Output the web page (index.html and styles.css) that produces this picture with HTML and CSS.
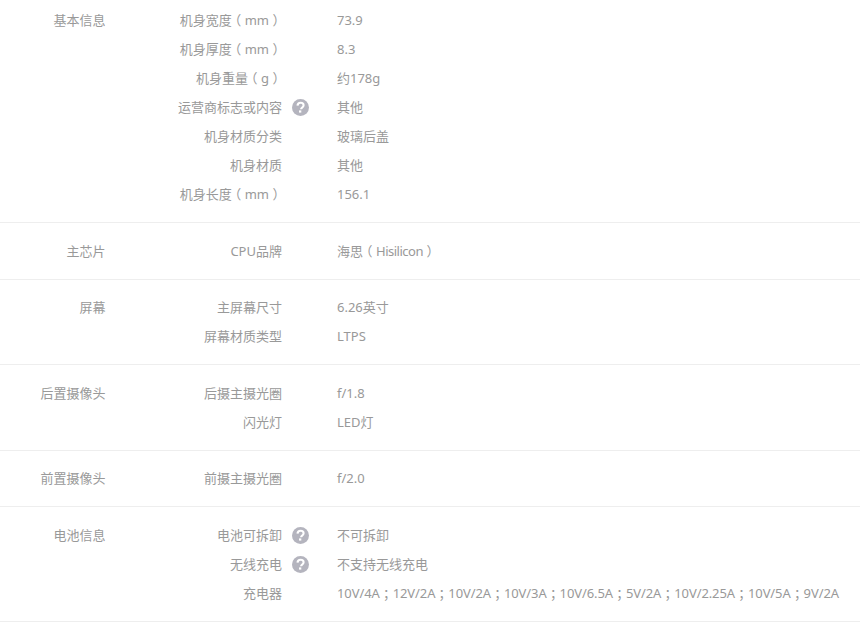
FILE: index.html
```html
<!DOCTYPE html>
<html lang="zh-CN">
<head>
<meta charset="utf-8">
<title>规格参数</title>
<link rel="stylesheet" href="styles.css">
</head>
<body>
<svg class="defs" width="0" height="0" aria-hidden="true"><symbol id="q" viewBox="0 0 17 17"><circle cx="8.5" cy="8.5" r="8.5" fill="#b4b4be"/><path d="M5.5 6.6C5.6 4.8 6.9 3.8 8.6 3.8c1.8 0 3 1.1 3 2.5 0 1.1-.6 1.8-1.5 2.3-.7.5-1 .9-1 1.7" fill="none" stroke="#fff" stroke-width="2.1"/><rect x="7" y="11.4" width="2.3" height="2.2" fill="#fff"/></symbol></svg>
<section class="group">
  <h3 class="group-title">基本信息</h3>
  <div class="rows">
    <div class="row"><div class="name">机身宽度<span class="lp">（</span>mm<span class="rp">）</span></div><div class="value">73.9</div></div>
    <div class="row"><div class="name">机身厚度<span class="lp">（</span>mm<span class="rp">）</span></div><div class="value">8.3</div></div>
    <div class="row"><div class="name">机身重量<span class="lp">（</span>g<span class="rp">）</span></div><div class="value">约178g</div></div>
    <div class="row"><div class="name">运营商标志或内容</div><svg class="help"><use href="#q"/></svg><div class="value">其他</div></div>
    <div class="row"><div class="name">机身材质分类</div><div class="value">玻璃后盖</div></div>
    <div class="row"><div class="name">机身材质</div><div class="value">其他</div></div>
    <div class="row"><div class="name">机身长度<span class="lp">（</span>mm<span class="rp">）</span></div><div class="value">156.1</div></div>
  </div>
</section>
<section class="group">
  <h3 class="group-title">主芯片</h3>
  <div class="rows">
    <div class="row"><div class="name">CPU品牌</div><div class="value">海思<span class="lp">（</span><span class="tight">Hisilicon</span><span class="rp">）</span></div></div>
  </div>
</section>
<section class="group">
  <h3 class="group-title">屏幕</h3>
  <div class="rows">
    <div class="row"><div class="name">主屏幕尺寸</div><div class="value">6.26英寸</div></div>
    <div class="row"><div class="name">屏幕材质类型</div><div class="value">LTPS</div></div>
  </div>
</section>
<section class="group">
  <h3 class="group-title">后置摄像头</h3>
  <div class="rows">
    <div class="row"><div class="name">后摄主摄光圈</div><div class="value">f/1.8</div></div>
    <div class="row"><div class="name">闪光灯</div><div class="value">LED灯</div></div>
  </div>
</section>
<section class="group">
  <h3 class="group-title">前置摄像头</h3>
  <div class="rows">
    <div class="row"><div class="name">前摄主摄光圈</div><div class="value">f/2.0</div></div>
  </div>
</section>
<section class="group">
  <h3 class="group-title">电池信息</h3>
  <div class="rows">
    <div class="row"><div class="name">电池可拆卸</div><svg class="help"><use href="#q"/></svg><div class="value">不可拆卸</div></div>
    <div class="row"><div class="name">无线充电</div><svg class="help"><use href="#q"/></svg><div class="value">不支持无线充电</div></div>
    <div class="row"><div class="name">充电器</div><div class="value charger">10V/4A<span class="sc">；</span>12V/2A<span class="sc">；</span>10V/2A<span class="sc">；</span>10V/3A<span class="sc">；</span>10V/6.5A<span class="sc">；</span>5V/2A<span class="sc">；</span>10V/2.25A<span class="sc">；</span>10V/5A<span class="sc">；</span>9V/2A</div></div>
  </div>
</section>
</body>
</html>
```
FILE: styles.css
```css
html, body {
  margin: 0;
  padding: 0;
  background: #fff;
}
body {
  height: 622px;
  overflow: hidden;
  padding-top: 6px;
  box-sizing: border-box;
  font-family: "Noto Sans", "Noto Sans CJK SC", sans-serif;
  font-size: 13px;
  color: #999;
}
.defs {
  position: absolute;
}
.group {
  display: flex;
  padding: 13.5px 0 13px;
  border-bottom: 1px solid #eee;
}
.group:first-of-type {
  padding-top: 0;
}
.group-title {
  flex: 0 0 105.5px;
  margin: 0;
  font-size: 13px;
  font-weight: normal;
  line-height: 29px;
  text-align: right;
}
.rows {
  flex: 1;
  min-width: 0;
}
.row {
  position: relative;
  display: flex;
  line-height: 29px;
  white-space: nowrap;
}
.name {
  flex: 0 0 176.5px;
  text-align: right;
}
.value {
  margin-left: 55px;
}
.charger {
  letter-spacing: -0.09px;
}
.tight {
  letter-spacing: -0.5px;
}
.lp,
.rp,
.sc {
  font-feature-settings: "halt";
}
.lp {
  margin-left: 3px;
  margin-right: 3.5px;
}
.rp {
  margin-left: 3.5px;
  margin-right: 3px;
}
.sc {
  margin-left: 3.25px;
  margin-right: 3.25px;
}
.help {
  position: absolute;
  left: 186.5px;
  top: 6px;
  width: 17px;
  height: 17px;
}
```
